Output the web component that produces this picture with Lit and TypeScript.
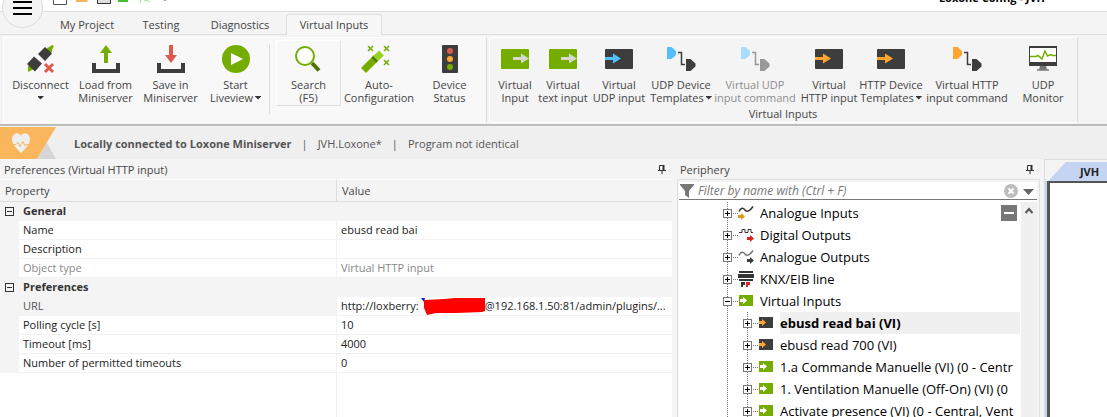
import { LitElement, html, css, svg, nothing } from "lit";
import { customElement } from "lit/decorators.js";
import { classMap } from "lit/directives/class-map.js";

const arrowBox = (box: string, arrow: string, x: number) => svg`
  <rect x="0" y="4" width="28" height="20" rx="1" fill=${box} />
  <path d="M${x} 12h8v-3.500l8 5-8 5v-3.500h-8z" fill=${arrow} />`;

const connector = (head: string, line: string) => svg`
  <path d="M0 2h4.500l4.500 4v4l-4.500 4H0z" fill=${head} />
  <path d="M11 7.500h3.500v12H18" fill="none" stroke=${line} stroke-width="1.500" />
  <path d="M19 14h4.500l5 4.500v3l-5 4.500H19z" fill=${line} />`;

const ICONS: Record<string, unknown> = {
  disconnect: svg`
    <path d="M20 3l5-2.500 1 0-1 6-3 4z" fill="#74ad00" />
    <path d="M1 27l0-6 4-3 4 5z" fill="#74ad00" />
    <path d="M24 0l3 1-2 3z" fill="#74ad00" />
    <path d="M11 9l7-7 7 6.500-7 7.500z" fill="#3d3d3d" />
    <path d="M0 19l7-7.500 8 7-7 8z" fill="#3d3d3d" />
    <path d="M18 19l8 8M26 19l-8 8" stroke="#dc5b4c" stroke-width="3" />`,
  load: svg`
    <path d="M2 18v8h24v-8" fill="none" stroke="#3d3d3d" stroke-width="4" />
    <path d="M14 0l6 8h-4v10h-4V8H8z" fill="#74ad00" />`,
  save: svg`
    <path d="M2 18v8h24v-8" fill="none" stroke="#3d3d3d" stroke-width="4" />
    <path d="M14 18l6-8h-4V0h-4v10H8z" fill="#dc5b4c" />`,
  start: svg`
    <circle cx="14" cy="14" r="14" fill="#74ad00" />
    <path d="M9 8l12 6-12 6z" fill="#fff" />`,
  search: svg`
    <path d="M17 18l7 7.500" stroke="#4d7300" stroke-width="4" />
    <circle cx="10" cy="11" r="9" fill="#fff" stroke="#74ad00" stroke-width="2" />`,
  auto: svg`
    <path d="M-1.500 25.500L9.500 14.500" stroke="#74ad00" stroke-width="7" />
    <path d="M9 15l2-2" stroke="#4d7300" stroke-width="7" />
    <path d="M10.500 13.500l6-5.500" stroke="#96d321" stroke-width="7" />
    <path d="M3 1l5 5m0-5l-5 5M19 1l5 5m0-5l-5 5M19 15l5 5m0-5l-5 5" stroke="#74ad00" stroke-width="1.500" />`,
  status: svg`
    <rect x="6" y="0" width="16" height="28" rx="1" fill="#3d3d3d" />
    <circle cx="14" cy="6" r="3" fill="#dc5b4c" />
    <circle cx="14" cy="14" r="3" fill="#ffa530" />
    <circle cx="14" cy="22" r="3" fill="#74ad00" />`,
  virtual: arrowBox("#74ad00", "#d8d8d0", 12),
  udpInput: arrowBox("#3d3d3d", "#55beff", 0),
  httpInput: arrowBox("#3d3d3d", "#ffa530", 0),
  udpLink: connector("#55beff", "#3d3d3d"),
  udpLinkOff: connector("#a9dcfb", "#999"),
  httpLink: connector("#ffa530", "#3d3d3d"),
  monitor: svg`
    <rect x="0" y="1" width="28" height="20" fill="#3d3d3d" />
    <rect x="1" y="3" width="26" height="14" fill="#fff" />
    <path d="M1 11.500h6l2-1 4 3.500 3-8 2.500 5 3-1.500 2 1H27" fill="none" stroke="#74ad00" stroke-width="1.500" />
    <path d="M11 21h6l1 3.500h-8z" fill="#777" />
    <path d="M8 25h12" stroke="#3d3d3d" stroke-width="1" />`,
};

interface Command {
  icon: string;
  lines: [string, string];
  size: string;
  menu?: boolean;
  disabled?: boolean;
  hot?: boolean;
}

const CONNECTION: Command[] = [
  { icon: "disconnect", lines: ["Disconnect", ""], size: "l", menu: true },
  { icon: "load", lines: ["Load from", "Miniserver"], size: "l" },
  { icon: "save", lines: ["Save in", "Miniserver"], size: "l" },
  { icon: "start", lines: ["Start", "Liveview"], size: "l", menu: true },
];
const TOOLS: Command[] = [
  { icon: "search", lines: ["Search", "(F5)"], size: "l", hot: true },
  { icon: "auto", lines: ["Auto-", "Configuration"], size: "xl" },
  { icon: "status", lines: ["Device", "Status"], size: "l" },
];
const INPUTS: Command[] = [
  { icon: "virtual", lines: ["Virtual", "Input"], size: "xs" },
  { icon: "virtual", lines: ["Virtual", "text input"], size: "xs" },
  { icon: "udpInput", lines: ["Virtual", "UDP input"], size: "m" },
  { icon: "udpLink", lines: ["UDP Device", "Templates"], size: "s", menu: true },
  { icon: "udpLinkOff", lines: ["Virtual UDP", "input command"], size: "xxl", disabled: true },
  { icon: "httpInput", lines: ["Virtual", "HTTP input"], size: "s" },
  { icon: "httpInput", lines: ["HTTP Device", "Templates"], size: "m", menu: true },
  { icon: "httpLink", lines: ["Virtual HTTP", "input command"], size: "xxl" },
  { icon: "monitor", lines: ["UDP", "Monitor"], size: "m" },
];

@customElement("ribbon-bar")
class RibbonBar extends LitElement {
  static styles = css`
    :host { display: block; }
    .groups { display: flex; gap: 2px; padding: 2px 0 1px 3px; border-bottom: 2px solid #bcbcbc; background: #f4f4f4; }
    .group { box-sizing: border-box; height: 86px; display: flex; flex-direction: column; justify-content: space-between;
      border: 1px solid #fff; border-right: 1px solid #dcdcdc; background: #f8f8f8; padding: 2px 4px 0 4px; }
    .plain { background: #f4f4f4; padding: 2px 2px 0 1px; }
    .row { display: flex; }
    .sep { width: 1px; margin: 4px 6px 0 1px; height: 70px; background: #dcdcdc; }
    .caption { line-height: 16px; text-align: center; }
    button { box-sizing: border-box; flex: none; height: 66px; border: 1px solid transparent; background: none; padding: 4px 0 0; margin: 0;
      font: inherit; line-height: 13px; color: #444; display: flex; flex-direction: column; align-items: center; white-space: nowrap; overflow: visible; }
    button svg { display: block; margin-bottom: 5px; flex: none; }
    .text { height: 13px; display: flex; align-items: center; gap: 2px; }
    .hot { border-color: #fff #e0e0e0 #e0e0e0 #fff; }
    .xs { width: 48px; } .s { width: 60px; } .m { width: 64px; } .l { width: 65px; } .xl { width: 76px; } .xxl { width: 88px; }
    button:disabled { color: #8e8e8e; }
    .caret { width: 6px; height: 4px; background: #333; clip-path: polygon(0 0, 100% 0, 100% 25%, 50% 100%, 0 25%); }
  `;
  private command(c: Command) {
    return html`<button class=${classMap({ [c.size]: true, hot: !!c.hot })} ?disabled=${!!c.disabled}>
      <svg width="28" height="28" viewBox="0 0 28 28" overflow="visible" aria-hidden="true">${ICONS[c.icon]}</svg>
      <span class="text">${c.lines[0]}</span>
      <span class="text">${c.lines[1]}${c.menu ? html`<span class="caret"></span>` : nothing}</span>
    </button>`;
  }
  render() {
    return html`<div class="groups">
      <section class="group"><div class="row">
        ${CONNECTION.map((c) => this.command(c))}<div class="sep"></div>${TOOLS.map((c) => this.command(c))}
      </div></section>
      <section class="group plain">
        <div class="row">${INPUTS.map((c) => this.command(c))}</div>
        <div class="caption">Virtual Inputs</div>
      </section>
    </div>`;
  }
}

const pin = html`<svg class="pin" width="8" height="9" viewBox="0 0 8 9" aria-hidden="true">
  <path d="M1.500 5V.500h4V5M0 5.500h8M4 6v3" fill="none" stroke="#333" /><path d="M4.500 0h2v5h-2z" fill="#333" /></svg>`;

@customElement("property-pane")
class PropertyPane extends LitElement {
  static styles = css`
    :host { display: flex; flex-direction: column; min-width: 0; padding-right: 5px; background: #f4f4f4; }
    .head { display: flex; justify-content: space-between; align-items: center; height: 20px; padding: 0 6px 0 4px; color: #444; }
    .body { flex: 1; background: linear-gradient(#f0f0f0, #f0f0f0) 50% 0 / 1px 100% no-repeat #fff; }
    table { width: 100%; table-layout: fixed; border-collapse: separate; border-spacing: 0; color: #1a1a1a; }
    .gutter { width: 19px; }
    .value { width: 50%; }
    th, td { padding: 0; text-align: left; font-weight: 400; white-space: nowrap; overflow: hidden; line-height: 18px; height: 18px; }
    thead th { height: 21px; background: #f4f4f4; color: #444; border-top: 1px solid #fff; border-bottom: 1px solid #dedede; padding-left: 5px; }
    thead .second { border-left: 1px solid #dedede; }
    tbody th, tbody td { border-bottom: 1px solid #f2f2f2; background: #fff; padding-left: 4px; }
    tbody td.val { border-left: 1px solid #f2f2f2; }
    tbody td.edge { background: #f4f4f4; border-color: #f4f4f4; padding-left: 5px; }
    tbody .section { background: #f4f4f4; border-color: #f4f4f4; font-weight: 700; color: #333; }
    .muted th, .muted td { color: #888; }
    .active th { background: #f4f4f4; color: #555; }
    .fold { display: block; width: 9px; height: 9px; padding: 0; border: 1px solid #333; box-sizing: border-box;
      background: linear-gradient(#333, #333) 50% 50% / 5px 1px no-repeat; }
    .url { display: flex; }
    .mask { flex: none; display: block; }
  `;
  private section(name: string) {
    return html`<tr><td class="edge"><button class="fold" aria-label="Collapse ${name}"></button></td>
      <th class="section" colspan="2" scope="rowgroup">${name}</th></tr>`;
  }
  private entry(name: string, value: unknown, kind = "") {
    return html`<tr class=${kind}><td class="edge"></td><th scope="row">${name}</th><td class="val">${value}</td></tr>`;
  }
  render() {
    const url = html`<span class="url">http://loxberry:<svg class="mask" width="66" height="18" viewBox="0 0 66 18" aria-hidden="true">
        <path d="M2 1h4l-1 4z" fill="#1010e0" />
        <path d="M5 3l20-1 11-1h30v13l-3 1-26 1-20 0-9 2-3-7z" fill="#f00" /></svg>@192.168.1.50:81/admin/plugins/...</span>`;
    return html`<div class="head"><span>Preferences (Virtual HTTP input)</span>${pin}</div>
      <div class="body"><table>
        <colgroup><col class="gutter" /><col /><col class="value" /></colgroup>
        <thead><tr><th colspan="2">Property</th><th class="second">Value</th></tr></thead>
        <tbody>
          ${this.section("General")}
          ${this.entry("Name", "ebusd read bai")}
          ${this.entry("Description", "")}
          ${this.entry("Object type", "Virtual HTTP input", "muted")}
          ${this.section("Preferences")}
          ${this.entry("URL", url, "active")}
          ${this.entry("Polling cycle [s]", "10")}
          ${this.entry("Timeout [ms]", "4000")}
          ${this.entry("Number of permitted timeouts", "0")}
        </tbody></table></div>`;
  }
}

interface Node { label: string; icon: string; level: number; open?: boolean; selected?: boolean; }

const NODES: Node[] = [
  { label: "Analogue Inputs", icon: "ain", level: 1 },
  { label: "Digital Outputs", icon: "dout", level: 1 },
  { label: "Analogue Outputs", icon: "aout", level: 1 },
  { label: "KNX/EIB line", icon: "knx", level: 1 },
  { label: "Virtual Inputs", icon: "vi", level: 1, open: true },
  { label: "ebusd read bai (VI)", icon: "http", level: 2, selected: true },
  { label: "ebusd read 700 (VI)", icon: "http", level: 2 },
  { label: "1.a Commande Manuelle (VI) (0 - Centr", icon: "vi", level: 2 },
  { label: "1. Ventilation Manuelle (Off-On) (VI) (0", icon: "vi", level: 2 },
  { label: "Activate presence (VI) (0 - Central, Vent", icon: "vi", level: 2 },
];

const wave = (color: string) => svg`<path d="M1 6.500c2-4 4-4 6-1.500s5 1 8-3.500" fill="none" stroke=${color} stroke-width="1.500" />`;
const smallArrow = (x: number, y: number, color: string) =>
  svg`<path d="M${x} ${y + 2}h3v-2l4 3.500-4 3.500v-2h-3z" fill=${color} />`;

const NODE_ICONS: Record<string, unknown> = {
  ain: svg`${wave("#333")}${smallArrow(0, 8, "#dc9a18")}`,
  dout: svg`<path d="M1 5.500h3v-3h3v3h3v-3h3v3h2" fill="none" stroke="#333" />${smallArrow(9, 8, "#dd2222")}`,
  aout: svg`${wave("#777")}${smallArrow(9, 8, "#3d3d3d")}`,
  knx: svg`<path d="M1 0h14v2H1zM0 3h16v4H0zM1 8h14v2H1zM3 11h4v3H5v2H3z" fill="#333" /><path d="M8 11h4v3h-2v2H8z" fill="#dd2222" />`,
  vi: svg`<path d="M1 2h14v11H1z" fill="#74ad00" />${smallArrow(2, 4, "#fff")}`,
  http: svg`<path d="M1 2h14v11H1z" fill="#3d3d3d" />${smallArrow(1, 4, "#ffa530")}`,
};

@customElement("periphery-pane")
class PeripheryPane extends LitElement {
  static styles = css`
    :host { display: flex; flex-direction: column; min-width: 0; min-height: 0; padding-right: 4px; background: #f4f4f4; }
    .head { flex: none; display: flex; justify-content: space-between; align-items: center; height: 20px; padding: 0 6px 0 3px; color: #444; }
    .frame { flex: 1; min-height: 0; display: flex; flex-direction: column; border: 1px solid #e0e0e0; border-bottom: 0; padding: 2px 2px 0 1px; }
    .filter { flex: none; display: flex; align-items: center; height: 17px; background: #fff; border-bottom: 1px solid #777; padding: 0 3px 0 1px; gap: 4px; }
    .filter label { display: flex; flex: 1; align-items: center; gap: 4px; min-width: 0; }
    input { flex: 1; min-width: 0; border: 0; padding: 0; outline: 0; background: none; font: inherit; font-size: 12px; font-style: italic; height: 16px; }
    input::placeholder { color: #777; opacity: 1; }
    .bare { border: 0; padding: 0; background: none; display: block; flex: none; }
    .bare svg { display: block; }
    .area { flex: 1; min-height: 0; display: flex; background: #fff; }
    .tree { flex: 1; min-width: 0; margin: 2px 1px 0 0; padding-left: 42px; list-style: none; position: relative; overflow: hidden; font-size: 13px; color: #000; }
    .node { display: flex; align-items: center; height: 22px; white-space: nowrap; }
    .node svg { flex: none; display: block; }
    .name { flex: 1; min-width: 0; overflow: hidden; line-height: 22px; margin-left: 6px; }
    .selected { font-weight: 700; background: #f0f0f0; }
    .collapse { position: absolute; top: 3px; right: 3px; width: 16px; height: 16px; border: 0; padding: 0;
      background: linear-gradient(#fff, #fff) 50% 50% / 10px 2px no-repeat #777; }
    .scroll { flex: none; width: 16px; background: #f0f0f0; margin-top: 2px; padding-top: 5px; }
    .scroll svg { display: block; margin: 0 auto; }
  `;
  private node(n: Node) {
    const x = n.level === 1 ? 6 : 26;
    const width = n.level === 1 ? 17 : 37;
    const dots = (x1: number, y1: number, x2: number, y2: number) =>
      svg`<line x1=${x1} y1=${y1} x2=${x2} y2=${y2} stroke="#777" stroke-dasharray="1 1" />`;
    return html`<li class="node">
      <svg width=${width} height="22" viewBox="0 0 ${width} 22" aria-hidden="true">
        ${dots(6.5, 0, 6.5, 22)}${n.level === 2 ? dots(26.5, 0, 26.5, 22) : nothing}
        ${dots(x + 6, 11.5, x + 12, 11.5)}
        <rect x=${x - 3.5} y="7.500" width="8" height="8" fill="#fff" stroke="#777" />
        <path d=${`M${x - 2} 11.500h5${n.open ? "" : `M${x + 0.5} 9v5`}`} stroke="#000" />
      </svg>
      <svg width="16" height="16" viewBox="0 0 16 16" aria-hidden="true">${NODE_ICONS[n.icon]}</svg>
      <span class=${classMap({ name: true, selected: !!n.selected })}>${n.label}</span>
    </li>`;
  }
  render() {
    return html`<div class="head"><span>Periphery</span>${pin}</div>
      <div class="frame">
        <div class="filter">
          <label><svg width="14" height="14" viewBox="0 0 14 14" role="img" aria-label="Filter"><path d="M0 0h14v1L9 7v7l-4-3V7L0 1z" fill="#777" /></svg>
            <input type="text" placeholder="Filter by name with (Ctrl + F)" /></label>
          <button class="bare" aria-label="Clear filter"><svg width="14" height="14" viewBox="0 0 14 14">
            <circle cx="7" cy="7" r="7" fill="#bdbdbd" /><path d="M4.500 4.500l5 5m0-5l-5 5" stroke="#fff" stroke-width="2" /></svg></button>
          <button class="bare" aria-label="Filter options"><svg width="12" height="12" viewBox="0 0 12 12">
            <path d="M1 4h11L6.500 10z" fill="#666" /></svg></button>
        </div>
        <div class="area">
          <ul class="tree">${NODES.map((n) => this.node(n))}
            <button class="collapse" aria-label="Collapse all"></button></ul>
          <div class="scroll"><svg width="8" height="7" viewBox="0 0 8 7"><path d="M.500 6L4 2l3.500 4" fill="none" stroke="#555" stroke-width="2" /></svg></div>
        </div>
      </div>`;
  }
}

@customElement("app-root")
class AppRoot extends LitElement {
  static styles = css`
    :host { display: flex; flex-direction: column; height: 100vh; overflow: hidden; position: relative; background: #f4f4f4;
      font: 11px "Open Sans", "Noto Sans", sans-serif; color: #444; }
    .title { flex: none; display: flex; justify-content: space-between; align-items: flex-start; height: 11px; background: #fff;
      border-bottom: 1px solid #dedede; padding: 0 62px 0 53px; overflow: hidden; }
    .title svg { display: block; }
    .name { line-height: 14px; margin-top: -9px; font-weight: 700; color: #000; }
    .menu { position: absolute; left: 2px; top: -13px; width: 41px; height: 41px; border-radius: 50%; border: 1px solid #dcdcdc;
      background: #f4f4f4; padding: 0; box-sizing: border-box; display: grid; place-items: center; }
    .menu svg { display: block; }
    .tabs { flex: none; display: flex; height: 22px; padding-left: 46px; border-bottom: 1px solid #dedede; }
    .tab { font: inherit; color: #444; background: none; border: 1px solid transparent; border-bottom: 0; padding: 0; margin: 2px 0 0;
      box-sizing: border-box; height: 21px; line-height: 18px; white-space: nowrap; }
    .t1 { width: 82px; } .t2 { width: 66px; } .t3 { width: 92px; } .t4 { width: 96px; }
    .current { border-color: #dedede; border-radius: 3px 3px 0 0; background: #f7f7f7; }
    .state { flex: none; display: flex; align-items: center; height: 32px; background: #efefef; color: #555; margin-top: 1px; white-space: nowrap; }
    .state svg { display: block; margin-right: 18px; }
    .bar { margin: 0 10px; }
    .work { flex: 1; min-height: 0; display: grid; grid-template-columns: 677fr 367fr 63fr; grid-template-rows: minmax(0, 1fr); }
    .doc { display: flex; flex-direction: column; border-left: 1px solid #dcdcdc; border-top: 1px solid #dcdcdc; min-width: 0; }
    .doctab { height: 19px; margin: 2px 0 0 3px; border: 0; padding: 0 0 0 24px; font: inherit; font-weight: 700; color: #222; line-height: 17px; background: #c5d4f3;
      clip-path: polygon(0 100%, 18px 0, 100% 0, 100% 100%); }
    .sheet { flex: 1; margin-left: 2px; background: #fff; border: solid #555; border-width: 2px 0 0 3px; }
    .canvas { flex: 1; display: flex; background: #c5d4f3; }
  `;
  render() {
    return html`
      <header class="title">
        <svg width="130" height="5" viewBox="0 0 130 5" aria-hidden="true">
          <path d="M.500 0v4.500h13V0" fill="#fff" stroke="#555" />
          <path d="M23 0h12l-1 2H23z" fill="#f6b45e" />
          <path d="M44.500 0v3.500h13V0" fill="#ddd" stroke="#333" />
          <path d="M65 0h10v2H65z" fill="#46c030" />
          <path d="M87.500 3V0M91 1l4-1M94 0l3 2" stroke="#a8dba0" fill="none" />
          <path d="M112 0v1" stroke="#444" />
        </svg>
        <span class="name">Loxone Config - JVH</span>
      </header>
      <nav class="tabs">
        <button class="tab t1">My Project</button><button class="tab t2">Testing</button>
        <button class="tab t3">Diagnostics</button><button class="tab t4 current">Virtual Inputs</button>
      </nav>
      <ribbon-bar></ribbon-bar>
      <div class="state">
        <svg width="56" height="32" viewBox="0 0 56 32" aria-hidden="true">
          <path d="M47 16l9 16H37z" fill="#d6d6d6" /><path d="M0 0h56L37 32H0z" fill="#f9b65c" />
          <path d="M21 26C15 20 12 17 12 12c0-6 7-8 9-3 2-5 9-3 9 3 0 5-3 8-9 14z" fill="#eee" />
          <path d="M11 17.500h5l2-2 2 4 3-5 2 4 2-1h4" fill="none" stroke="#f9b65c" />
        </svg>
        <strong>Locally connected to Loxone Miniserver</strong><span class="bar">|</span><span>JVH.Loxone*</span><span class="bar">|</span><span>Program not identical</span>
      </div>
      <main class="work">
        <property-pane></property-pane>
        <periphery-pane></periphery-pane>
        <section class="doc"><button class="doctab">JVH</button><div class="canvas"><div class="sheet"></div></div></section>
      </main>
      <button class="menu" aria-label="Menu"><svg width="19" height="15" viewBox="0 0 19 15">
        <path d="M0 2h19M0 8h19M0 14h19" stroke="#000" stroke-width="2" /></svg></button>`;
  }
}
